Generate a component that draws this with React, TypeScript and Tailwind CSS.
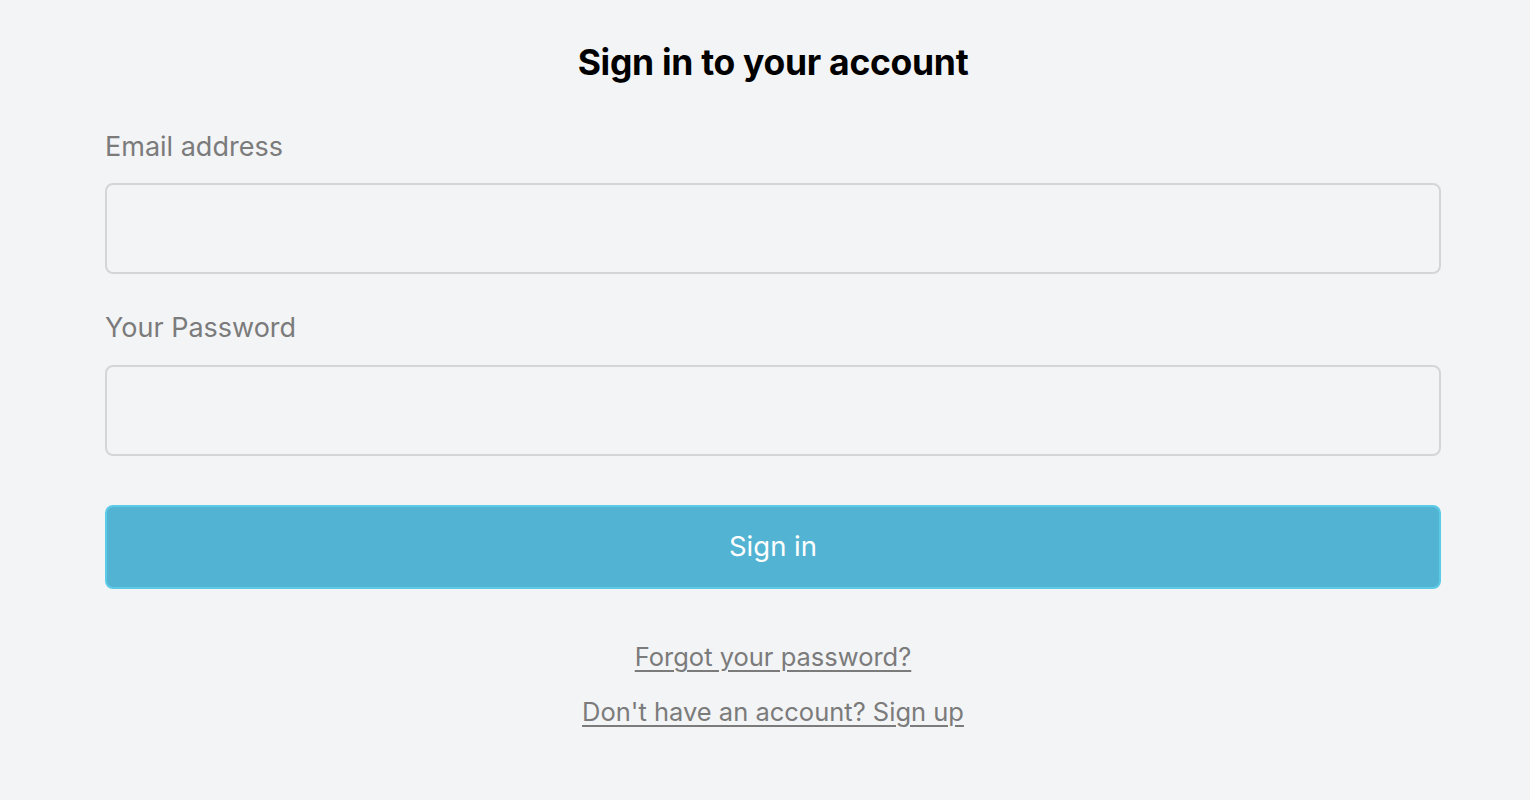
export default function App() {
  return (
    <div
      className="min-h-[800px] w-full bg-[#f3f4f6] pl-[105px] pr-[89px] pt-[40px]"
      style={{ fontFamily: "Inter, 'Noto Sans', sans-serif" }}
    >
      <h1 className="text-center text-[35.5px] font-bold leading-[46px] text-black tracking-[-0.3px]">
        Sign in to your account
      </h1>
      <form className="mt-[44px] flex flex-col">
        <label className="text-[27px] leading-[34px] text-[#7b7b7b]">Email address</label>
        <input
          type="email"
          className="mt-[19px] h-[91px] w-full rounded-[8px] border-2 border-[#d4d5d8] bg-[#f3f4f6] outline-none"
        />
        <label className="mt-[37px] text-[27px] leading-[34px] text-[#7b7b7b]">Your Password</label>
        <input
          type="password"
          className="mt-[20px] h-[91px] w-full rounded-[8px] border-2 border-[#d4d5d8] bg-[#f3f4f6] outline-none"
        />
        <button
          type="button"
          className="mt-[49px] h-[84px] w-full rounded-[8px] border-2 border-[#5ccbe8] bg-[#52b3d2] text-[27.5px] text-white"
        >
          Sign in
        </button>
      </form>
      <div className="mt-[51px] flex flex-col items-center gap-[22px] text-[25.5px] leading-[33px] text-[#7b7b7b]">
        <a href="#" className="underline underline-offset-[4px]">Forgot your password?</a>
        <a href="#" className="underline underline-offset-[4px]">Don't have an account? Sign up</a>
      </div>
    </div>
  );
}
